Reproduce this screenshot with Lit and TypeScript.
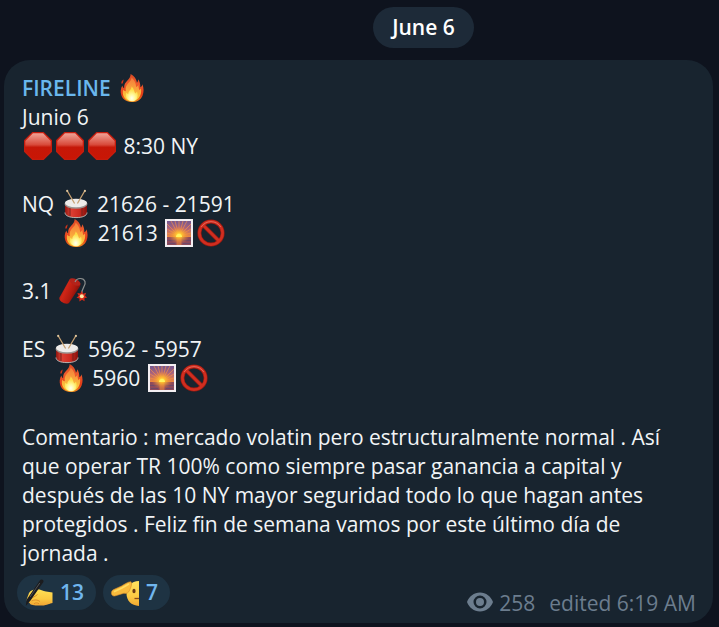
import { LitElement, html, css, svg, nothing } from "lit";
import { customElement, property } from "lit/decorators.js";

const art: Record<string, unknown> = {
  fire: svg`
    <defs>
      <linearGradient id="f1" x1="0" y1="0" x2="0" y2="1">
        <stop offset="0" stop-color="#d84a24"/><stop offset=".35" stop-color="#ee5a2c"/><stop offset=".75" stop-color="#e23a16"/><stop offset="1" stop-color="#f08c1e"/>
      </linearGradient>
      <linearGradient id="f2" x1="0" y1="0" x2="0" y2="1">
        <stop offset="0" stop-color="#f37a3a"/><stop offset=".45" stop-color="#f9a03c"/><stop offset="1" stop-color="#fcd83c"/>
      </linearGradient>
      <radialGradient id="f3" cx=".5" cy=".8" r=".6">
        <stop offset="0" stop-color="#fffff0"/><stop offset=".45" stop-color="#fff99a"/><stop offset="1" stop-color="#fddc45"/>
      </radialGradient>
    </defs>
    <path fill="#cf331b" d="M3.500 9.800C2.900 7.600 4 6.200 5.800 5.400C5.200 6.900 5.200 8.200 4.600 9.600Z"/>
    <path fill="url(#f1)" d="M12.600 0C15.800 1.600 18.600 4.800 18.900 8.800C19.800 7.800 20.200 6.600 20 5.200C21.800 7.200 22.300 9.600 22.400 13.200C23.600 12.600 24.300 11.500 24.500 10.200C25.800 14 26 18 24.600 21.400C22.800 25.800 18.800 28 14 28C8.900 28 4.800 25.600 3.300 21.200C2.200 17.800 2.600 14.200 4.400 11.400C4.600 12.800 5.200 13.700 6.100 14.200C6 10.800 7.200 8.800 9.400 6.600C11.400 4.500 12.700 2.600 12.600 0Z"/>
    <path fill="url(#f2)" d="M13.600 3.500C16.400 6.200 17.800 9 18.200 13C19.400 12.400 20 11.500 20.400 10.200C20.600 12.600 20.800 14.300 21.300 16C22 15.700 22.600 15.200 23 14.600C23.400 18 22.900 20.800 21.400 23C19.800 25.700 17.200 27.200 14 27.200C10.600 27.200 7.600 25.800 6 23C4.700 20.600 4.500 18 5.300 15.400C5.900 16.500 6.700 17 7.800 17.200C7.200 13.600 8.200 11.400 10.200 9.200C12.200 7.200 13.500 5.800 13.600 3.500Z"/>
    <path fill="url(#f3)" d="M13.600 12.500C16.200 14.800 16 17.200 17.200 19.400C18 19 18.600 18.400 19 17.600C20.200 20.600 20 23 18.600 24.900C17.500 26.400 15.900 27.200 14 27.200C11.900 27.200 10 26.300 8.900 24.600C7.600 22.700 7.500 20.600 8.300 18.500C8.900 19.400 9.500 19.800 10.300 20C10.100 16.800 13.800 15.600 13.600 12.500Z"/>`,
  stop: svg`
    <defs><linearGradient id="s1" x1="0" y1="0" x2="0" y2="1">
      <stop offset="0" stop-color="#f0a296"/><stop offset=".45" stop-color="#d84a3a"/><stop offset=".55" stop-color="#c51808"/><stop offset="1" stop-color="#c91605"/>
    </linearGradient></defs>
    <path fill="#c61c0d" d="M8.300 0h11.400L28 8.300v11.400L19.700 28H8.300L0 19.700V8.300Z"/>
    <path fill="url(#s1)" d="M8.900 1.300h10.200L26.700 8.900v10.200L19.100 26.700H8.900L1.300 19.100V8.900Z"/>`,
  drum: svg`
    <defs><linearGradient id="d1"><stop offset="0" stop-color="#8f1710"/><stop offset=".25" stop-color="#dd4034"/><stop offset=".65" stop-color="#cc2a20"/><stop offset="1" stop-color="#85120d"/></linearGradient></defs>
    <path fill="url(#d1)" d="M3 13v9.500c0 3 5 5.200 11 5.200s11-2.200 11-5.200V13Z"/>
    <path fill="none" stroke="#b9b1ae" stroke-width="1" d="M3 22.500c0 3.500 5 5.100 11 5.100s11-1.600 11-5.100"/>
    <path stroke="#76201b" stroke-width="1" d="M8 18v8M20 18v8"/>
    <ellipse cx="14" cy="14" rx="11.500" ry="4.800" fill="#9a9592"/>
    <ellipse cx="14" cy="13" rx="11" ry="4.200" fill="#eeecea"/>
    <path stroke="#c6a071" stroke-width="1.300" stroke-linecap="round" d="M5.300 1l7 12M22.700 1l-7 12"/>
    <circle cx="5.200" cy=".9" r="1.100" fill="#e0c59b"/><circle cx="22.900" cy=".9" r="1.100" fill="#e0c59b"/>`,
  sunrise: svg`
    <defs>
      <linearGradient id="r1" x1="0" y1="0" x2="0" y2="1"><stop offset="0" stop-color="#75588f"/><stop offset=".5" stop-color="#b0657a"/><stop offset="1" stop-color="#ee8a3c"/></linearGradient>
      <radialGradient id="r2" cx=".5" cy=".6" r=".45"><stop offset="0" stop-color="#fff56b"/><stop offset=".25" stop-color="#ffc230"/><stop offset="1" stop-color="#f07a35" stop-opacity="0"/></radialGradient>
    </defs>
    <path fill="#f3eff2" d="M0 0h28v28H0Z"/><path fill="url(#r1)" d="M2 2h24v16H2Z"/>
    <path stroke="#f58f48" stroke-width=".9" opacity=".75" d="M14 17L2 14M14 17L2 10M14 17L2 5M14 17L6 2M14 17L10 2M14 17V2M14 17l4-15M14 17L22 2M14 17L26 5M14 17l12-7M14 17l12-3"/>
    <path fill="#8d4b5c" d="M2 18h24v8H2Z"/><path fill="#c76f48" d="M11.500 18h5v8h-5Z"/>
    <path stroke="#6f4868" d="M2 21.500h8M18 21.500h8M3 24.500h7M18 24.500h7"/>
    <path fill="url(#r2)" d="M2 4h24v20H2Z"/><path fill="#fff45e" d="M11 18a3 3 0 0 1 6 0Z"/>`,
  banned: svg`
    <circle cx="14" cy="14" r="11.600" fill="none" stroke="#9c1a10" stroke-width="4"/>
    <path stroke="#9c1a10" stroke-width="4" d="M6 6l16 16"/>
    <circle cx="14" cy="14" r="11.600" fill="none" stroke="#d02e20" stroke-width="2.600"/>
    <path stroke="#d02e20" stroke-width="2.600" d="M6 6l16 16"/>
    <path fill="none" stroke="#ea7266" stroke-width=".8" d="M4.200 8a11.600 11.600 0 0 1 19.600 0"/>`,
  dynamite: svg`
    <defs><linearGradient id="y1" x1="0" y1="0" x2="1" y2=".5"><stop offset="0" stop-color="#8c100a"/><stop offset=".4" stop-color="#d02617"/><stop offset=".7" stop-color="#b01a0f"/><stop offset="1" stop-color="#6c0c08"/></linearGradient></defs>
    <path fill="url(#y1)" d="M10.500 2.500L.500 20.500c-1.500 3.500 7 8 9.500 5.500L21.500 8.500Z"/>
    <ellipse cx="16" cy="5" rx="6" ry="3" transform="rotate(26 16 5)" fill="#b3231a"/>
    <path fill="none" stroke="#8d8f8e" stroke-width="1.200" d="M16 5C18 .500 24.500 .300 26 4.500C27.500 9 22 10.500 22.700 18"/>
    <path fill="#d62a18" d="M22.700 14l1.400 2.700 3-1-1 3 2 1.800-2.700.8.200 3-2.600-1.600-2.600 1.700.1-3-3-.7 2.200-2-1.400-2.700 3 .6Z"/>
    <circle cx="22.800" cy="19.200" r="2" fill="#ffe9a2"/>`,
  writing: svg`
    <defs><linearGradient id="w1" x1="0" y1="0" x2="0" y2="1"><stop offset="0" stop-color="#ffe056"/><stop offset=".6" stop-color="#fbc941"/><stop offset="1" stop-color="#f0a534"/></linearGradient></defs>
    <path fill="url(#w1)" d="M3.500 15.500C4 12.500 8 10 12 10.300C15.500 10.300 18 12 21 12.600L27.500 13.500V24C24.500 24.300 22.500 26.400 17 26.500C11 26.600 5.500 26.600 4.800 24.300L2 22.500C1 20.500 2.500 18.500 3.500 15.500Z"/>
    <path fill="none" stroke="#d98a28" stroke-width=".9" d="M12.500 15.500c-2 2-5 2.500-7 5M6.500 22c3-1.600 6-1.400 8.500.5M9 24.800c1.500-1.300 3.500-1.200 5 0"/>
    <path fill="#1b1c1f" d="M14.800 1.500C16-.600 19.300.500 18.400 3L5.500 21.500L.800 27L1.600 20.800Z"/>
    <path stroke="#66686b" stroke-width=".7" d="M14.800 4L5 18"/>`,
  salute: svg`
    <defs><linearGradient id="h1" x1="0" y1="0" x2="0" y2="1"><stop offset="0" stop-color="#ffe35f"/><stop offset=".6" stop-color="#fccb44"/><stop offset="1" stop-color="#f2a931"/></linearGradient></defs>
    <path fill="url(#h1)" d="M28 2V27C20 26.500 15.500 21.500 15.500 14.500C15.500 7.500 20 2.300 28 2Z"/>
    <ellipse cx="23" cy="12" rx="1.600" ry="2.300" fill="#6b3b14"/>
    <path stroke="#8a4b18" stroke-width="1.300" d="M23.500 19.500H28"/>
    <path fill="#f8ba3c" stroke="#d58a2a" stroke-width=".6" d="M20 2.800C17 2.600 14 5 10.500 7L2.200 10.800C-.900 12.600 .300 17.700 3.800 17L13 14.200C15.500 15 17.500 13.800 18.600 11.200C19.800 8.500 21.500 5 20 2.800Z"/>
    <path fill="none" stroke="#ffdc60" stroke-width="1.500" d="M3 12.800L11 9l7-4"/>`,
};

@customElement("emoji-icon")
class EmojiIcon extends LitElement {
  static styles = css`
    :host { display: inline-block; width: 28px; height: 28px; margin: 0 2px; vertical-align: -6px; line-height: 0; }
    .art { width: 100%; height: 100%; overflow: visible; }
  `;
  @property() name = "fire";
  render() {
    return html`<svg class="art" viewBox="0 0 28 28" fill="none" role="img" aria-label=${this.name}>${art[this.name] ?? nothing}</svg>`;
  }
}

const e = (name: string) => html`<emoji-icon name=${name}></emoji-icon>`;

@customElement("app-root")
class AppRoot extends LitElement {
  static styles = css`
    :host {
      display: block;
      box-sizing: border-box;
      min-height: 100vh;
      padding: 7px 6px 5px 4px;
      background: #0e131e;
      color: #f1f4f6;
      font: 21px/29px "Open Sans", "Noto Sans", sans-serif;
    }
    .day { display: flex; justify-content: center; padding-left: 130px; margin-bottom: 12px; }
    .date { padding: 6px 19px; border-radius: 21px; background: #1d2a38; color: #fff; font-weight: 600; }
    .message { padding: 14px 17px 5px 18px; border-radius: 26px; background: #18242f; }
    .author { margin: 0; font: inherit; font-weight: 600; }
    .name { color: #6ab7ed; text-decoration: none; }
    .line { margin: 0; min-height: 29px; white-space: pre-wrap; }
    .comment { margin: 30px 0 0; }
    .gap { margin-top: 29px; }
    .footer { display: flex; justify-content: space-between; align-items: flex-start; margin-top: 7px; }
    .reactions { display: flex; gap: 7px; margin-left: -5px; }
    .reaction {
      display: flex; align-items: center; gap: 5px; height: 35px; padding: 0 12px 0 6px;
      border: 0; border-radius: 18px; background: #1e3343; color: #70b6ee;
      font: inherit; font-weight: 600;
    }
    .meta { display: flex; align-items: center; gap: 6px; padding-top: 14px; color: #6c7d8e; }
    .eye { width: 26px; height: 20px; margin-bottom: 4px; }
    .time { margin-left: 8px; }
  `;
  render() {
    return html`
      <div class="day"><time class="date">June 6</time></div>
      <article class="message">
        <h2 class="author"><a class="name" href="#">FIRELINE</a> ${e("fire")}</h2>
        <p class="line">Junio 6</p>
        <p class="line">${e("stop")}${e("stop")}${e("stop")} 8:30 NY</p>
        <p class="line gap">NQ ${e("drum")} 21626 - 21591</p>
        <p class="line">       ${e("fire")} 21613 ${e("sunrise")}${e("banned")}</p>
        <p class="line gap">3.1 ${e("dynamite")}</p>
        <p class="line gap">ES ${e("drum")} 5962 - 5957</p>
        <p class="line">      ${e("fire")} 5960 ${e("sunrise")}${e("banned")}</p>
        <p class="comment">Comentario : mercado volatin pero estructuralmente normal . Así que operar TR 100% como siempre pasar ganancia a capital y después de las 10 NY mayor seguridad todo lo que hagan antes protegidos . Feliz fin de semana vamos por este último día de jornada .</p>
        <footer class="footer">
          <div class="reactions">
            <button class="reaction">${e("writing")}13</button>
            <button class="reaction">${e("salute")}7</button>
          </div>
          <div class="meta">
            <svg class="eye" viewBox="0 0 26 20" role="img" aria-label="Views"><path fill="#6c7d8e" fill-rule="evenodd" d="M13 .500C19 .500 24 4.500 26 10C24 15.500 19 19.500 13 19.500S2 15.500 0 10C2 4.500 7 .500 13 .500ZM13 3.500a6.500 6.500 0 1 0 0 13 6.500 6.500 0 0 0 0-13Z"/><circle cx="13" cy="10" r="4" fill="#6c7d8e"/></svg>
            <span>258</span><span class="time">edited 6:19 AM</span>
          </div>
        </footer>
      </article>`;
  }
}
